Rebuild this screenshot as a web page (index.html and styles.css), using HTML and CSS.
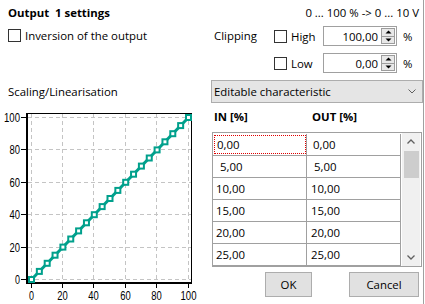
FILE: index.html
```html
<!DOCTYPE html>
<html>
<head>
<meta charset="utf-8">
<link rel="stylesheet" href="styles.css">
</head>
<body>
<div class="win">
  <div class="hdr">
    <div class="title">Output&nbsp; 1 settings</div>
    <div class="range">0 ... 100 % -&gt; 0 ... 10 V</div>
  </div>
  <div class="main">
    <div class="left">
      <div class="chk inv"><span class="box"></span><span>Inversion of the output</span></div>
      <div class="scal">Scaling/Linearisation</div>
      <svg class="chart" width="205" height="199" viewBox="0 105 205 199">
        <g class="grid">
          <line x1="31.5" y1="114" x2="31.5" y2="282"/>
          <line x1="62.5" y1="114" x2="62.5" y2="282"/>
          <line x1="93.5" y1="114" x2="93.5" y2="282"/>
          <line x1="125.5" y1="114" x2="125.5" y2="282"/>
          <line x1="156.5" y1="114" x2="156.5" y2="282"/>
          <line x1="188.5" y1="114" x2="188.5" y2="282"/>
          <line x1="28" y1="279.5" x2="191" y2="279.5"/>
          <line x1="28" y1="247.5" x2="191" y2="247.5"/>
          <line x1="28" y1="214.5" x2="191" y2="214.5"/>
          <line x1="28" y1="182.5" x2="191" y2="182.5"/>
          <line x1="28" y1="149.5" x2="191" y2="149.5"/>
          <line x1="28" y1="117.5" x2="191" y2="117.5"/>
        </g>
        <g class="frame">
          <line x1="27" y1="113.5" x2="192" y2="113.5"/>
          <line x1="191.5" y1="113" x2="191.5" y2="284"/>
          <rect x="26" y="113" width="2" height="171"/>
          <rect x="26" y="282" width="166" height="2"/>
          <line x1="21" y1="279.5" x2="26" y2="279.5"/>
          <line x1="21" y1="247.5" x2="26" y2="247.5"/>
          <line x1="21" y1="214.5" x2="26" y2="214.5"/>
          <line x1="21" y1="182.5" x2="26" y2="182.5"/>
          <line x1="21" y1="149.5" x2="26" y2="149.5"/>
          <line x1="21" y1="117.5" x2="26" y2="117.5"/>
          <line x1="31.5" y1="284" x2="31.5" y2="288"/>
          <line x1="62.5" y1="284" x2="62.5" y2="288"/>
          <line x1="93.5" y1="284" x2="93.5" y2="288"/>
          <line x1="125.5" y1="284" x2="125.5" y2="288"/>
          <line x1="156.5" y1="284" x2="156.5" y2="288"/>
          <line x1="188.5" y1="284" x2="188.5" y2="288"/>
        </g>
        <g class="lbl ylbl">
          <text x="20" y="284" textLength="5" lengthAdjust="spacingAndGlyphs">0</text>
          <text x="20" y="251.5" textLength="10.5" lengthAdjust="spacingAndGlyphs">20</text>
          <text x="20" y="219" textLength="10.5" lengthAdjust="spacingAndGlyphs">40</text>
          <text x="20" y="186.5" textLength="10.5" lengthAdjust="spacingAndGlyphs">60</text>
          <text x="20" y="154" textLength="10.5" lengthAdjust="spacingAndGlyphs">80</text>
          <text x="20" y="122" textLength="16" lengthAdjust="spacingAndGlyphs">100</text>
        </g>
        <g class="lbl xlbl">
          <text x="31.5" y="300" textLength="5" lengthAdjust="spacingAndGlyphs">0</text>
          <text x="62.5" y="300" textLength="10.5" lengthAdjust="spacingAndGlyphs">20</text>
          <text x="93.5" y="300" textLength="10.5" lengthAdjust="spacingAndGlyphs">40</text>
          <text x="125.5" y="300" textLength="10.5" lengthAdjust="spacingAndGlyphs">60</text>
          <text x="156.5" y="300" textLength="10.5" lengthAdjust="spacingAndGlyphs">80</text>
          <text x="188.5" y="300" textLength="16" lengthAdjust="spacingAndGlyphs">100</text>
        </g>
        <line class="dline" x1="31.5" y1="279.5" x2="188.5" y2="117.5"/>
        <g class="mk">
          <rect x="29" y="277" width="5" height="5"/>
          <rect x="36.85" y="268.9" width="5" height="5"/>
          <rect x="44.7" y="260.8" width="5" height="5"/>
          <rect x="52.55" y="252.7" width="5" height="5"/>
          <rect x="60.4" y="244.6" width="5" height="5"/>
          <rect x="68.25" y="236.5" width="5" height="5"/>
          <rect x="76.1" y="228.4" width="5" height="5"/>
          <rect x="83.95" y="220.3" width="5" height="5"/>
          <rect x="91.8" y="212.2" width="5" height="5"/>
          <rect x="99.65" y="204.1" width="5" height="5"/>
          <rect x="107.5" y="196" width="5" height="5"/>
          <rect x="115.35" y="187.9" width="5" height="5"/>
          <rect x="123.2" y="179.8" width="5" height="5"/>
          <rect x="131.05" y="171.7" width="5" height="5"/>
          <rect x="138.9" y="163.6" width="5" height="5"/>
          <rect x="146.75" y="155.5" width="5" height="5"/>
          <rect x="154.6" y="147.4" width="5" height="5"/>
          <rect x="162.45" y="139.3" width="5" height="5"/>
          <rect x="170.3" y="131.2" width="5" height="5"/>
          <rect x="178.15" y="123.1" width="5" height="5"/>
          <rect x="186" y="115" width="5" height="5"/>
        </g>
      </svg>
    </div>
    <div class="right">
      <div class="clip">
        <div class="cliplabel">Clipping</div>
        <div class="cliprows">
          <div class="crow">
            <div class="chk"><span class="box"></span><span>High</span></div>
            <div class="spin"><span class="val">100,00</span><span class="btns"><span class="sb"><svg width="7" height="4" viewBox="0 0 7 4"><path d="M0.5 3.5 L3.5 0.5 L6.5 3.5 Z"/></svg></span><span class="sb"><svg width="7" height="4" viewBox="0 0 7 4"><path d="M0.5 0.5 L3.5 3.5 L6.5 0.5 Z"/></svg></span></span></div>
            <span class="pct">%</span>
          </div>
          <div class="crow">
            <div class="chk"><span class="box"></span><span>Low</span></div>
            <div class="spin"><span class="val">0,00</span><span class="btns"><span class="sb"><svg width="7" height="4" viewBox="0 0 7 4"><path d="M0.5 3.5 L3.5 0.5 L6.5 3.5 Z"/></svg></span><span class="sb"><svg width="7" height="4" viewBox="0 0 7 4"><path d="M0.5 0.5 L3.5 3.5 L6.5 0.5 Z"/></svg></span></span></div>
            <span class="pct">%</span>
          </div>
        </div>
      </div>
      <div class="combo"><span>Editable characteristic</span><svg width="8" height="5" viewBox="0 0 8 5"><path d="M0.5 0.5 L4 4 L7.5 0.5" fill="none" stroke="#606060" stroke-width="1"/></svg></div>
      <div class="thead"><span class="h1">IN [%]</span><span class="h2">OUT [%]</span></div>
      <div class="table">
        <div class="rows">
          <div class="row"><div class="c1 focus p1">0,00</div><div class="c2 q1">0,00</div></div>
          <div class="row"><div class="c1 p2">5,00</div><div class="c2 q2">5,00</div></div>
          <div class="row"><div class="c1">10,00</div><div class="c2">10,00</div></div>
          <div class="row"><div class="c1">15,00</div><div class="c2">15,00</div></div>
          <div class="row"><div class="c1">20,00</div><div class="c2">20,00</div></div>
          <div class="row"><div class="c1">25,00</div><div class="c2">25,00</div></div>
        </div>
        <div class="scroll">
          <svg class="arr" width="8" height="5" viewBox="0 0 8 5"><path d="M0.5 4.5 L4 1 L7.5 4.5" fill="none" stroke="#606060" stroke-width="1.3"/></svg>
          <div class="thumb"></div>
          <div class="spacer"></div>
          <svg class="arr" width="8" height="5" viewBox="0 0 8 5"><path d="M0.5 0.5 L4 4 L7.5 0.5" fill="none" stroke="#606060" stroke-width="1.3"/></svg>
        </div>
      </div>
      <div class="btnrow"><button class="btn ok">OK</button><button class="btn cancel">Cancel</button></div>
    </div>
  </div>
</div>
</body>
</html>
```

FILE: styles.css
```css
* { box-sizing: border-box; margin: 0; padding: 0; }
body { margin: 0; background: #fff; font-family: "Open Sans", "Noto Sans", sans-serif; font-size: 11.4px; color: #000; }
.win { width: 424px; height: 304px; border-right: 1px solid #a0a0a0; display: flex; flex-direction: column; overflow: hidden; }
.hdr { display: flex; justify-content: space-between; align-items: center; height: 16px; margin-top: 4px; padding: 0 4px 0 8px; }
.title { font-weight: 700; }
.main { display: flex; flex: 1; }
.left { width: 211px; display: flex; flex-direction: column; }
.chk { display: flex; align-items: center; gap: 4px; height: 16px; }
.box { width: 13px; height: 13px; border: 1px solid #333; background: #fff; flex: none; }
.inv { margin: 7px 0 0 8px; }
.scal { margin: 41px 0 0 8px; height: 16px; line-height: 16px; }
.chart { display: block; margin-top: 5px; }
.grid line { stroke: #c4c4c4; stroke-width: 1; stroke-dasharray: 4 3; }
.frame line { stroke: #000; stroke-width: 1; }
.frame rect { fill: #000; }
.lbl text { font-family: "Liberation Sans Narrow", "Liberation Sans", sans-serif; font-size: 12px; fill: #000; }
.ylbl text { text-anchor: end; }
.xlbl text { text-anchor: middle; }
.dline { stroke: #00a08c; stroke-width: 3; }
.mk rect { fill: #fff; stroke: #00a08c; stroke-width: 2; }
.right { width: 212px; display: flex; flex-direction: column; }
.clip { display: flex; margin-top: 6px; }
.cliplabel { width: 63px; padding-left: 3px; height: 20px; line-height: 20px; }
.cliprows { display: flex; flex-direction: column; gap: 7px; }
.crow { display: flex; align-items: center; height: 20px; }
.crow .chk { width: 49px; }
.spin { width: 74px; height: 20px; border: 1px solid #a0a0a0; display: flex; align-items: center; background: #fff; }
.val { flex: 1; text-align: right; padding-right: 3px; }
.btns { width: 14px; height: 16px; display: flex; flex-direction: column; margin-right: 1px; }
.sb { flex: 1; border: 1px solid #9c9c9c; background: #e8e8e8; display: flex; align-items: center; justify-content: center; }
.sb + .sb { border-top: none; }
.sb path { fill: #000; }
.pct { margin-left: 6px; }
.combo { margin-top: 7px; height: 23px; border: 1px solid #adadad; background: #e5e5e5; display: flex; align-items: center; justify-content: space-between; padding: 0 6px 0 2px; }
.thead { display: flex; margin-top: 6px; height: 16px; line-height: 16px; font-weight: 700; }
.h1 { width: 101px; padding-left: 3px; }
.table { margin: 7px 0 0 1px; width: 210px; height: 135px; border: 1px solid #a0a0a0; display: flex; }
.rows { width: 188px; padding-top: 1px; display: flex; flex-direction: column; }
.row { display: flex; height: 22px; border-bottom: 1px solid #a0a0a0; }
.c1, .c2 { width: 94px; border-right: 1px solid #a0a0a0; line-height: 21px; }
.c1 { padding-left: 3px; }
.c2 { padding-left: 4px; }
.p1 { padding-left: 4px; }
.p2 { padding-left: 7px; }
.q1 { padding-left: 6px; }
.q2 { padding-left: 7px; }
.focus { outline: 1px dotted #e00000; outline-offset: -2px; }
.scroll { width: 18px; margin-left: 1px; background: #f0f0f0; display: flex; flex-direction: column; align-items: center; padding: 6px 0 6px; }
.arr { display: block; flex: none; }
.thumb { width: 15px; height: 27px; background: #cdcdcd; margin-top: 7px; }
.spacer { flex: 1; }
.btnrow { display: flex; justify-content: flex-end; gap: 37px; margin-top: 5px; padding-right: 4px; }
.btn { height: 25px; border: 1px solid #adadad; background: #e1e1e1; font: inherit; color: #000; }
.ok { width: 47px; }
.cancel { width: 70px; }
```
